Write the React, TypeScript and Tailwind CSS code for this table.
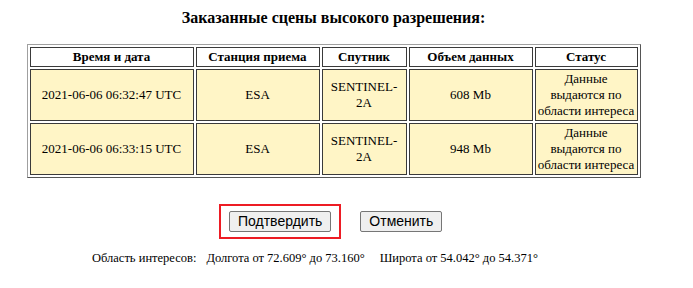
const rows = [
  { time: '2021-06-06 06:32:47 UTC', station: 'ESA', size: '608 Mb' },
  { time: '2021-06-06 06:33:15 UTC', station: 'ESA', size: '948 Mb' },
]

const th = 'border border-[#3a3a3a] bg-white p-px font-bold'
const td = 'border border-[#3a3a3a] bg-[#fff5c6] p-px'
const btn =
  'h-[21px] rounded-[2px] border border-[#767676] bg-[#efefef] px-[8px] leading-[19px]'

export default function App() {
  return (
    <div className="w-[667px] bg-white text-black [font-family:'Liberation_Serif','Times_New_Roman',serif]">
      <h2 className="pt-[8px] text-center text-[16px] leading-[20px] font-bold">
        Заказанные сцены высокого разрешения:
      </h2>

      <table className="mx-auto mt-[16px] w-[614px] table-fixed border-separate border-spacing-[2px] border border-t-[#a0a0a0] border-l-[#a0a0a0] border-r-[#555] border-b-[#555] text-center text-[13px] leading-[16px]">
        <thead>
          <tr>
            <th className={th + ' w-[164px]'}>Время и дата</th>
            <th className={th + ' w-[124px]'}>Станция приема</th>
            <th className={th + ' w-[85px]'}>Спутник</th>
            <th className={th + ' w-[124px]'}>Объем данных</th>
            <th className={th + ' w-[103px]'}>Статус</th>
          </tr>
        </thead>
        <tbody>
          {rows.map((r) => (
            <tr key={r.time}>
              <td className={td}>{r.time}</td>
              <td className={td}>{r.station}</td>
              <td className={td}>
                SENTINEL-
                <br />
                2A
              </td>
              <td className={td}>{r.size}</td>
              <td className={td + ' whitespace-nowrap'}>
                Данные
                <br />
                выдаются по
                <br />
                области интереса
              </td>
            </tr>
          ))}
        </tbody>
      </table>

      <div className="mt-[26px] flex items-center gap-[19px] pl-[219px] [font-family:'Liberation_Sans',Arial,sans-serif] text-[14px]">
        <div className="border-2 border-[#ed1c24] py-[5px] pr-[8px] pl-[8px]">
          <button className={btn}>Подтвердить</button>
        </div>
        <button className={btn}>Отменить</button>
      </div>

      <p className="mt-[11px] flex pl-[92px] text-[12.5px] leading-[16px] whitespace-nowrap">
        <span>Область интересов:</span>
        <span className="ml-[10px]">Долгота от 72.609° до 73.160°</span>
        <span className="ml-[15px]">Широта от 54.042° до 54.371°</span>
      </p>
    </div>
  )
}
